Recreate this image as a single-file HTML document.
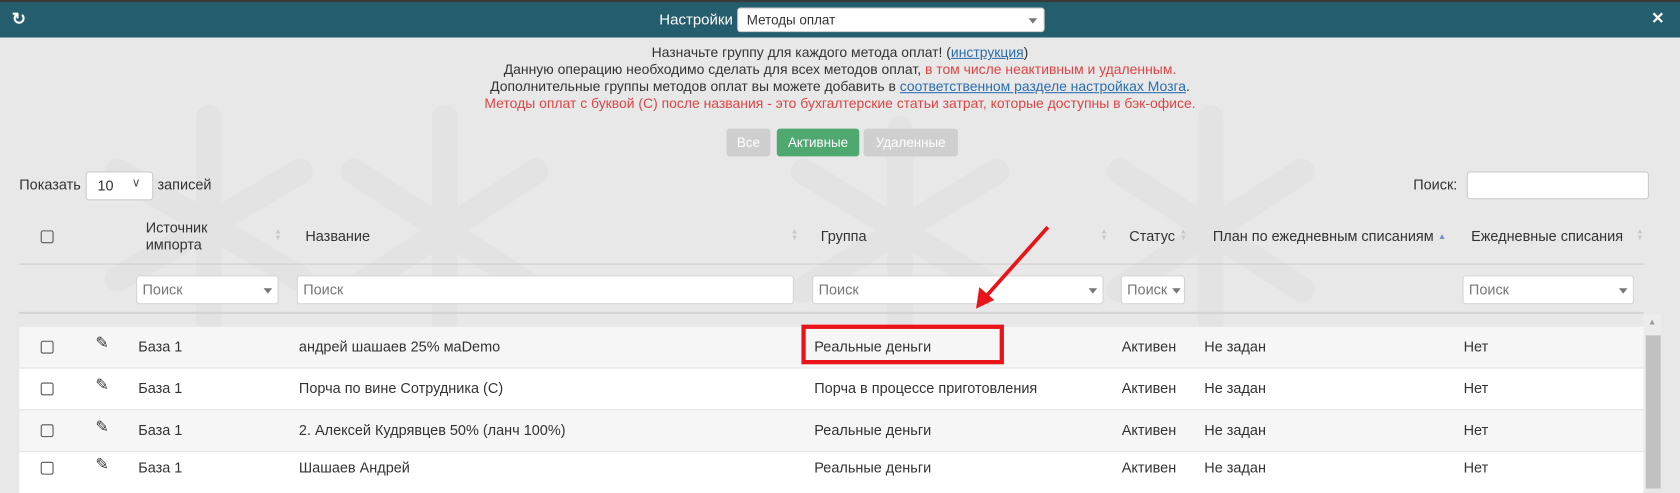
<!DOCTYPE html>
<html><head><meta charset="utf-8"><style>
*{box-sizing:border-box;margin:0;padding:0}
html,body{width:1680px;height:488px;overflow:hidden;background:#e8e8e8}
#w{position:absolute;left:0;top:0;width:1568px;height:456px;transform:scale(1.07143);transform-origin:0 0;font-family:"Liberation Sans",sans-serif;font-size:13.5px;color:#333}
.abs,.t{position:absolute}
.t{font-size:13.5px;color:#333;line-height:16px}
.sel{position:absolute;background:#fff;border:1px solid #ccc;border-radius:3px}
.caret{position:absolute;width:0;height:0;border-left:4px solid transparent;border-right:4px solid transparent;border-top:5px solid #777}
.info{position:absolute;top:41px;left:0;width:1568px;text-align:center;font-size:13px;line-height:16px;color:#333}
.red{color:#e04343}
a{color:#2a6db0;text-decoration:underline}
.btn{position:absolute;top:120px;height:26px;border-radius:3px;color:#fff;font-size:12.5px;line-height:26px;text-align:center}
.cb{position:absolute;width:12px;height:12px;border:1.5px solid #555;border-radius:2px}
.row{position:absolute;left:18px;width:1516px;border-top:1px solid #e3e3e3}
.fi{position:absolute;top:257px;height:27px;background:#fff;border:1px solid #d4d4d4;border-radius:3px;color:#777;padding:5px 5px;font-size:13.5px}
.sort{position:absolute;color:#c8c8c8;font-size:7px;line-height:6px}
</style></head><body><div id="w">
<svg class="abs" style="left:0;top:0" width="1568" height="456">
<g stroke="#e3e3e3" stroke-width="24" stroke-linecap="round" fill="none">
<line x1="195" y1="110" x2="195" y2="300"/><line x1="110" y1="160" x2="280" y2="260"/><line x1="280" y1="160" x2="110" y2="260"/>
<line x1="415" y1="110" x2="415" y2="300"/><line x1="330" y1="160" x2="500" y2="270"/><line x1="500" y1="160" x2="330" y2="270"/>
<line x1="840" y1="120" x2="840" y2="300"/><line x1="750" y1="160" x2="930" y2="270"/><line x1="930" y1="160" x2="750" y2="270"/>
<line x1="1130" y1="110" x2="1130" y2="300"/><line x1="1045" y1="160" x2="1215" y2="270"/><line x1="1215" y1="160" x2="1045" y2="270"/>
</g></svg>
<div class="abs" style="left:0;top:0;width:1568px;height:35px;background:#245d6d"></div>
<div class="abs" style="left:0;top:0;width:1568px;height:2px;background:#3a3a3a"></div>
<div class="abs" style="left:11px;top:8px;font-size:16px;font-weight:bold;color:#fff">&#x21bb;</div>
<div class="abs" style="left:560px;width:124px;text-align:right;top:10px;font-size:14px;color:#fff">Настройки</div>
<div class="sel" style="left:688px;top:7px;width:287px;height:23px;font-size:12.5px;padding:4px 8px">Методы оплат<div class="caret" style="left:271px;top:9px"></div></div>
<div class="abs" style="left:1541px;top:8px;font-size:15px;font-weight:bold;color:#fff">✕</div>
<div class="info">Назначьте группу для каждого метода оплат! (<a>инструкция</a>)<br>Данную операцию необходимо сделать для всех методов оплат, <span class="red">в том числе неактивным и удаленным.</span><br>Дополнительные группы методов оплат вы можете добавить в <a>соответственном разделе настройках Мозга</a>.<br><span class="red">Методы оплат с буквой (С) после названия - это бухгалтерские статьи затрат, которые доступны в бэк-офисе.</span></div>
<div class="btn" style="left:678px;width:41px;background:#cfcfcf">Все</div>
<div class="btn" style="left:725px;width:77px;background:#4fa870">Активные</div>
<div class="btn" style="left:806px;width:88px;background:#cfcfcf">Удаленные</div>
<div class="t" style="left:18px;top:165px">Показать</div>
<div class="sel" style="left:80px;top:160px;width:63px;height:27px;padding:5px 10px">10<span class="abs" style="left:42px;top:3px;font-size:11px;color:#555">&#x2228;</span></div>
<div class="t" style="left:147px;top:165px">записей</div>
<div class="t" style="left:1319px;top:165px">Поиск:</div>
<div class="sel" style="left:1369px;top:160px;width:170px;height:26px"></div>
<div class="cb" style="left:38px;top:215px"></div>
<div class="t" style="left:136px;top:205px">Источник<br>импорта</div>
<div class="t" style="left:285px;top:213px">Название</div>
<div class="t" style="left:766px;top:213px">Группа</div>
<div class="t" style="left:1054px;top:213px">Статус</div>
<div class="t" style="left:1132px;top:213px">План по ежедневным списаниям <span style="color:#7a8fd0;font-size:8px;vertical-align:top">▲</span></div>
<div class="t" style="left:1373px;top:213px">Ежедневные списания</div>
<div class="sort" style="left:256px;top:214px">▲<br>▼</div>
<div class="sort" style="left:738px;top:214px">▲<br>▼</div>
<div class="sort" style="left:1027px;top:214px">▲<br>▼</div>
<div class="sort" style="left:1101px;top:214px">▲<br>▼</div>
<div class="sort" style="left:1527px;top:214px">▲<br>▼</div>
<div class="abs" style="left:18px;top:246px;width:1516px;height:1px;background:#cfcfcf"></div>
<div class="fi" style="left:127px;width:133px">Поиск<div class="caret" style="left:118px;top:11px"></div></div>
<div class="fi" style="left:277px;width:464px">Поиск</div>
<div class="fi" style="left:758px;width:272px">Поиск<div class="caret" style="left:257px;top:11px"></div></div>
<div class="fi" style="left:1046px;width:60px">Поиск<div class="caret" style="left:47px;top:11px"></div></div>
<div class="fi" style="left:1365px;width:160px">Поиск<div class="caret" style="left:145px;top:11px"></div></div>
<div class="abs" style="left:18px;top:291px;width:1516px;height:2px;background:#d4d4d4"></div>
<div class="row" style="top:305px;height:38px;background:#f6f6f6;border-top:none"></div>
<div class="row" style="top:343px;height:39px;background:#fff"></div>
<div class="row" style="top:382px;height:39px;background:#f6f6f6"></div>
<div class="row" style="top:421px;height:39px;background:#fff"></div>
<div class="abs" style="left:1534px;top:293px;width:16px;height:163px;background:#ececec"></div>
<div class="abs" style="left:1536px;top:313px;width:14px;height:143px;background:#c1c1c1"></div>
<div class="abs" style="left:1538px;top:296px;color:#9a9a9a;font-size:8px">▲</div>

<div class="cb" style="left:38px;top:318px"></div><div class="t" style="left:89px;top:313px;font-size:15px">✎</div><div class="t" style="left:129px;top:316px">База 1</div><div class="t" style="left:279px;top:316px">андрей шашаев 25% маDemo</div><div class="t" style="left:760px;top:316px">Реальные деньги</div><div class="t" style="left:1047px;top:316px">Активен</div><div class="t" style="left:1124px;top:316px">Не задан</div><div class="t" style="left:1366px;top:316px">Нет</div>
<div class="cb" style="left:38px;top:357px"></div><div class="t" style="left:89px;top:352px;font-size:15px">✎</div><div class="t" style="left:129px;top:355px">База 1</div><div class="t" style="left:279px;top:355px">Порча по вине Сотрудника (С)</div><div class="t" style="left:760px;top:355px">Порча в процессе приготовления</div><div class="t" style="left:1047px;top:355px">Активен</div><div class="t" style="left:1124px;top:355px">Не задан</div><div class="t" style="left:1366px;top:355px">Нет</div>
<div class="cb" style="left:38px;top:396px"></div><div class="t" style="left:89px;top:391px;font-size:15px">✎</div><div class="t" style="left:129px;top:394px">База 1</div><div class="t" style="left:279px;top:394px">2. Алексей Кудрявцев 50% (ланч 100%)</div><div class="t" style="left:760px;top:394px">Реальные деньги</div><div class="t" style="left:1047px;top:394px">Активен</div><div class="t" style="left:1124px;top:394px">Не задан</div><div class="t" style="left:1366px;top:394px">Нет</div>
<div class="cb" style="left:38px;top:431px"></div><div class="t" style="left:89px;top:426px;font-size:15px">✎</div><div class="t" style="left:129px;top:429px">База 1</div><div class="t" style="left:279px;top:429px">Шашаев Андрей</div><div class="t" style="left:760px;top:429px">Реальные деньги</div><div class="t" style="left:1047px;top:429px">Активен</div><div class="t" style="left:1124px;top:429px">Не задан</div><div class="t" style="left:1366px;top:429px">Нет</div>

<div class="abs" style="left:748px;top:303px;width:189px;height:37px;border:4px solid #e8141a"></div>
<svg class="abs" style="left:0;top:0" width="1568" height="456"><line x1="978" y1="212" x2="920" y2="277" stroke="#e8141a" stroke-width="3.5"/><polygon points="911,288 914,268 928,280" fill="#e8141a"/></svg>
</div></body></html>
